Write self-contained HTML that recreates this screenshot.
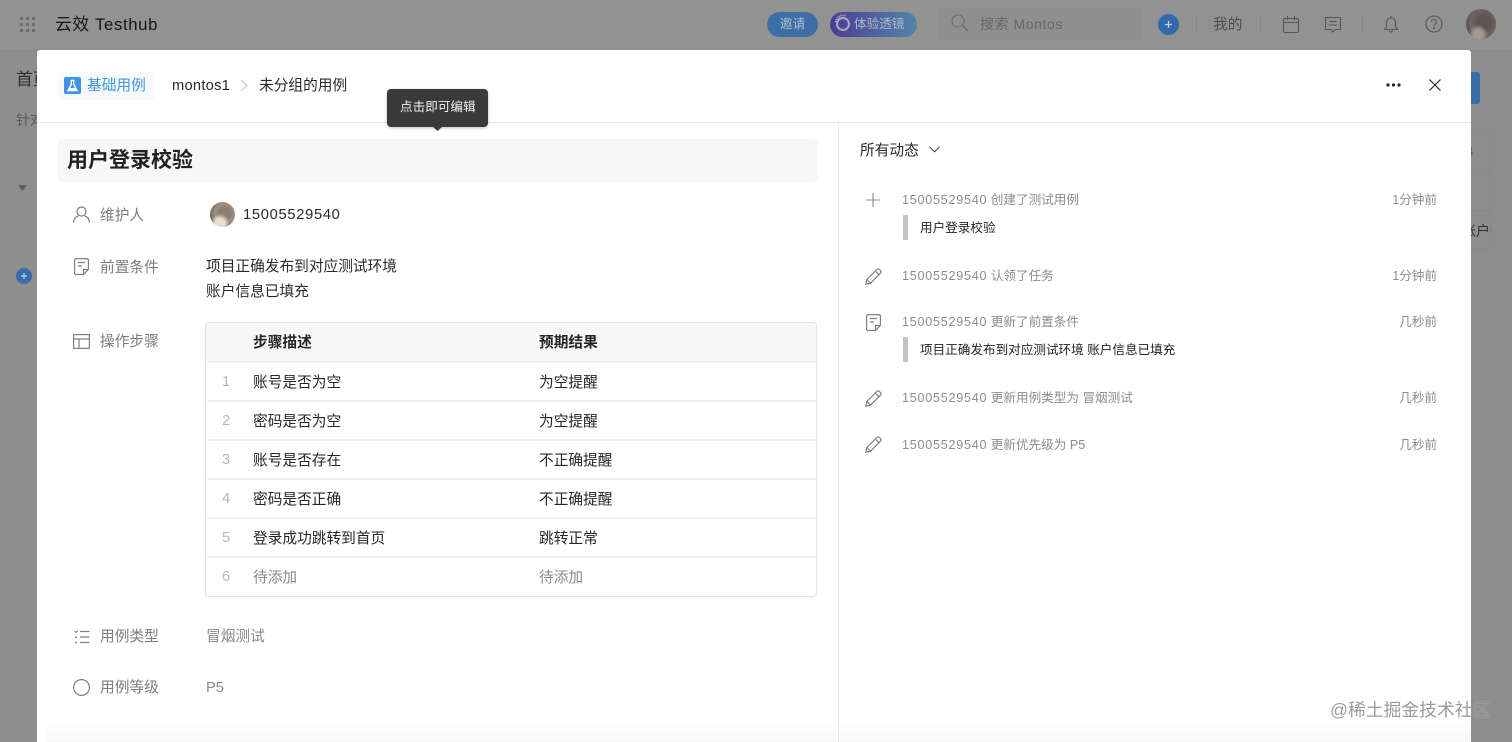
<!DOCTYPE html>
<html lang="zh"><head><meta charset="utf-8"><title>云效 Testhub</title>
<style>
html,body{margin:0;padding:0}
body{width:1512px;height:742px;overflow:hidden;position:relative;background:#8e8e8e;font-family:"Liberation Sans","Noto Sans CJK SC",sans-serif;color:#1f1f1f;font-size:14.7px}
.t{position:absolute;white-space:nowrap;line-height:20px}
.a{position:absolute}
svg{position:absolute;overflow:visible;fill:none}
.lb{color:#7d7d7d;left:100px}
.n{letter-spacing:.7px}
.ac{color:#8c8c8c;font-size:12.6px;left:902px}
.ac span{letter-spacing:.75px}
.tm{color:#8c8c8c;font-size:12.6px;right:75px}
.q{position:absolute;left:903px;width:5px;background:#c4c4c4}
.bk{font-size:12.6px;left:920px;color:#222}
.hl{position:absolute;left:207px;width:609px;height:2px;background:#f0f0f0}
.num{left:222px;color:#b8b8b8;font-size:14.7px}
.c1{left:253px;color:#262626}
.c2{left:539px;color:#262626}
.g{color:#8a8a8a}
.ic{stroke:#7f7f7f;stroke-width:1.2}
.top{stroke:#565656;stroke-width:1.1}
</style></head><body>

<!-- top bar (dimmed) -->
<div class="a" style="left:0;top:0;width:1512px;height:50px;background:#929292"></div>
<div class="a" style="left:0;top:50px;width:1512px;height:1px;background:#8a8a8a"></div>
<svg style="left:20px;top:17px" width="15" height="15"><g fill="#6e6e6e"><rect x="0" y="0" width="3" height="3"/><rect x="6" y="0" width="3" height="3"/><rect x="12" y="0" width="3" height="3"/><rect x="0" y="6" width="3" height="3"/><rect x="6" y="6" width="3" height="3"/><rect x="12" y="6" width="3" height="3"/><rect x="0" y="12" width="3" height="3"/><rect x="6" y="12" width="3" height="3"/><rect x="12" y="12" width="3" height="3"/></g></svg>
<div class="t" style="left:55px;top:15px;font-size:16.8px;color:#161616;letter-spacing:.6px">云效 Testhub</div>

<div class="a" style="left:767px;top:12px;width:51px;height:25px;border-radius:13px;background:#3d6fa6"></div>
<div class="t" style="left:780px;top:14px;font-size:12.6px;color:#b0bfd2">邀请</div>
<div class="a" style="left:830px;top:12px;width:87px;height:25px;border-radius:13px;background:linear-gradient(90deg,#4c3d96 0%,#51609f 50%,#4f86a8 100%)"></div>
<svg style="left:832px;top:14px" width="20" height="20"><circle cx="11" cy="10" r="6" stroke="#a9a7c4" stroke-width="2"/><path d="M4 8A7 7 0 0 1 14 2" stroke="#b9b6d0" stroke-width="2" stroke-dasharray="1 1"/></svg>
<div class="t" style="left:854px;top:14px;font-size:12.6px;color:#aeb8ca">体验透镜</div>

<div class="a" style="left:938px;top:8px;width:204px;height:32px;border-radius:4px;background:#8f8f8f"></div>
<svg style="left:951px;top:14px" width="20" height="20"><circle cx="7" cy="7" r="6" stroke="#6f6f6f" stroke-width="1.1"/><path d="M11.5 11.5L17 17" stroke="#6f6f6f" stroke-width="1.6"/></svg>
<div class="t" style="left:980px;top:14px;font-size:14px;color:#686868;letter-spacing:.55px">搜索 Montos</div>

<div class="a" style="left:1158px;top:14px;width:21px;height:21px;border-radius:50%;background:#3468ad"></div>
<svg style="left:1158px;top:14px" width="21" height="21"><path d="M7 10.5H14M10.5 7V14" stroke="#c3d2e6" stroke-width="1.3"/></svg>
<div class="a" style="left:1196px;top:16px;width:1px;height:16px;background:#888"></div>
<div class="t" style="left:1213px;top:15px;font-size:14.7px;color:#4e4e4e">我的</div>
<div class="a" style="left:1260px;top:16px;width:1px;height:16px;background:#888"></div>
<svg style="left:1283px;top:16px" width="16" height="17" class="top"><rect x=".5" y="2.5" width="15" height="14" rx="1.5"/><path d="M.5 6.5H15.500M4.500 0V4M11.500 0V4"/></svg>
<svg style="left:1325px;top:17px" width="16" height="16" class="top"><path d="M.5 .5H15.500V12.500H10L8 15 6 12.500H.5Z"/><path d="M4 4.500H12M4 8H12"/></svg>
<div class="a" style="left:1362px;top:16px;width:1px;height:16px;background:#888"></div>
<svg style="left:1384px;top:16px" width="14" height="17" class="top"><path d="M.5 13.500H13.500L11.500 11V6.500C11.500 4 9.500 2 7 2S2.500 4 2.500 6.500V11ZM7 0V2M5.500 14.500C5.500 16.500 8.500 16.500 8.500 14.500"/></svg>
<svg style="left:1425px;top:15px" width="18" height="18" class="top"><circle cx="9" cy="9" r="8"/><path d="M6.500 7C6.500 3.500 11.500 3.500 11.500 7C11.500 8.800 9 9 9 11"/><circle cx="9" cy="13.200" r=".5" fill="#565656"/></svg>
<div class="a" style="left:1466px;top:9px;width:30px;height:30px;border-radius:50%;background:radial-gradient(circle at 40% 85%,#a59c90 0 14%,transparent 32%),radial-gradient(circle at 60% 45%,#5c5652 0 26%,#6d6561 55%,#35302d 100%)"></div>

<!-- page behind -->
<div class="t" style="left:16px;top:70px;font-size:16.8px;color:#2e2e2e">首页</div>
<div class="t" style="left:16px;top:110px;font-size:14px;color:#5b5b5b">针对</div>
<svg style="left:18px;top:185px" width="9" height="7"><path d="M0 0H9L4.500 6Z" fill="#5e5e5e"/></svg>
<div class="a" style="left:16px;top:268px;width:16px;height:16px;border-radius:50%;background:#3a6ba8"></div>
<svg style="left:16px;top:268px" width="16" height="16"><path d="M5 8H11M8 5V11" stroke="#c3d2e6" stroke-width="1.200"/></svg>
<div class="a" style="left:1471px;top:72px;width:9px;height:32px;border-radius:0 3px 3px 0;background:#356fa8"></div>
<div class="a" style="left:1471px;top:131px;width:20px;height:118px;border:1px solid #8a8a8a;border-left:0;box-sizing:border-box;border-radius:0 3px 3px 0"></div>
<div class="a" style="left:1471px;top:171px;width:20px;height:1px;background:#8a8a8a"></div>
<div class="a" style="left:1471px;top:210px;width:20px;height:1px;background:#8a8a8a"></div>
<div class="t" style="left:1471px;top:141px;width:8px;overflow:hidden;font-size:14px;color:#555"><span style="margin-left:-7px">B</span></div>
<div class="t" style="left:1471px;top:221px;width:20px;overflow:hidden;font-size:14px;color:#333"><span style="margin-left:-9px">账户信</span></div>

<!-- modal -->
<div class="a" style="left:37px;top:50px;width:1434px;height:692px;background:#fff;border-radius:3px 3px 0 0;overflow:hidden">
  <div class="a" style="left:8px;top:670px;width:1426px;height:22px;background:linear-gradient(#fff,#f8f8f8)"></div>
  <div class="a" style="left:0;top:72px;width:1434px;height:1px;background:#e6e6e6"></div>
  <div class="a" style="left:801px;top:72px;width:1px;height:620px;background:#e8e8e8"></div>
</div>

<!-- header -->
<div class="a" style="left:58px;top:72px;width:97px;height:28px;border-radius:4px;background:#f6fafd"></div>
<div class="a" style="left:64px;top:77px;width:17px;height:17px;border-radius:2px;background:#3f95e3"></div>
<svg style="left:64px;top:77px" width="17" height="17"><path d="M6.500 3.500H10.500M7.300 3.500V7.500L4 13.500H13L9.700 7.500V3.500" stroke="#fff" stroke-width="1.400"/><path d="M5.500 11H11.500L13 13.500H4Z" fill="#fff"/></svg>
<div class="t" style="left:87px;top:76px;color:#3f95e3">基础用例</div>
<div class="t" style="left:172px;top:76px;color:#2a2a2a;letter-spacing:.25px">montos1</div>
<svg style="left:240px;top:79px" width="8" height="13"><path d="M1 1L7 6.500L1 12" stroke="#c4c4c4" stroke-width="1"/></svg>
<div class="t" style="left:259px;top:76px;color:#2a2a2a">未分组的用例</div>
<svg style="left:1386px;top:83px" width="15" height="4"><g fill="#222"><circle cx="2" cy="2" r="1.600"/><circle cx="7.500" cy="2" r="1.600"/><circle cx="13" cy="2" r="1.600"/></g></svg>
<svg style="left:1429px;top:79px" width="12" height="12"><path d="M.5 .5L11.500 11.500M11.500 .5L.5 11.500" stroke="#222" stroke-width="1.200"/></svg>

<!-- title -->
<div class="a" style="left:58px;top:139px;width:760px;height:43px;border-radius:5px;background:#f7f7f7"></div>
<div class="t" style="left:67px;top:151px;font-size:21px;font-weight:700;color:#222">用户登录校验</div>

<!-- tooltip -->
<div class="a" style="left:387px;top:89px;width:101px;height:38px;border-radius:4px;background:#3a3a3a;box-shadow:0 1px 3px rgba(0,0,0,.25)"></div>
<svg style="left:432px;top:126px" width="11" height="5"><path d="M0 0H11L5.500 5Z" fill="#3a3a3a"/></svg>
<div class="t" style="left:400px;top:97px;font-size:12.6px;color:#f2f2f2">点击即可编辑</div>

<!-- fields -->
<svg style="left:73px;top:206px" width="17" height="17" class="ic"><circle cx="8.500" cy="5.500" r="4.500"/><path d="M.6 16.500C.8 12.500 3 10.500 5.500 9.800M16.400 16.500C16.200 12.500 14 10.500 11.500 9.800"/></svg>
<div class="t lb" style="top:206px">维护人</div>
<div class="a" style="left:210px;top:202px;width:25px;height:25px;border-radius:50%;background:radial-gradient(circle at 40% 85%,#e8dfd2 0 18%,transparent 36%),radial-gradient(circle at 60% 45%,#8d7f76 0 28%,#a08f83 50%,#3f332c 100%)"></div>
<div class="t n" style="left:243px;top:205px;color:#2a2a2a">15005529540</div>

<svg style="left:74px;top:258px" width="15" height="17" class="ic"><path d="M9.500 16.500H2C1 16.500 .6 16 .6 15V2C.6 1 1 .6 2 .6H13C14 .6 14.400 1 14.400 2V11.500ZM9.500 16.500V11.500H14.400M3.800 4.500H11M3.800 8H8"/></svg>
<div class="t lb" style="top:258px">前置条件</div>
<div class="t" style="left:206px;top:257px;color:#2a2a2a">项目正确发布到对应测试环境</div>
<div class="t" style="left:206px;top:282px;color:#2a2a2a">账户信息已填充</div>

<svg style="left:73px;top:334px" width="17" height="15" class="ic"><rect x=".6" y=".6" width="15.800" height="13.800"/><path d="M.6 5H16.400M6 5V14.400"/></svg>
<div class="t lb" style="top:332px">操作步骤</div>

<!-- table -->
<div class="a" style="left:205px;top:322px;width:612px;height:275px;box-sizing:border-box;border:1px solid #e4e4e4;border-radius:4px;box-shadow:0 1px 2px rgba(0,0,0,.05)"></div>
<div class="a" style="left:206px;top:323px;width:610px;height:38px;background:#f7f7f7;border-radius:3px 3px 0 0"></div>
<div class="hl" style="top:361px"></div><div class="hl" style="top:400px"></div><div class="hl" style="top:439px"></div><div class="hl" style="top:478px"></div><div class="hl" style="top:517px"></div><div class="hl" style="top:556px"></div>
<div class="t c1" style="top:333px;font-weight:700">步骤描述</div><div class="t c2" style="top:333px;font-weight:700">预期结果</div>
<div class="t num" style="top:372px">1</div><div class="t c1" style="top:373px">账号是否为空</div><div class="t c2" style="top:373px">为空提醒</div>
<div class="t num" style="top:411px">2</div><div class="t c1" style="top:412px">密码是否为空</div><div class="t c2" style="top:412px">为空提醒</div>
<div class="t num" style="top:450px">3</div><div class="t c1" style="top:451px">账号是否存在</div><div class="t c2" style="top:451px">不正确提醒</div>
<div class="t num" style="top:489px">4</div><div class="t c1" style="top:490px">密码是否正确</div><div class="t c2" style="top:490px">不正确提醒</div>
<div class="t num" style="top:528px">5</div><div class="t c1" style="top:529px">登录成功跳转到首页</div><div class="t c2" style="top:529px">跳转正常</div>
<div class="t num" style="top:567px">6</div><div class="t c1 g" style="top:568px">待添加</div><div class="t c2 g" style="top:568px">待添加</div>

<svg style="left:74px;top:630px" width="16" height="14" class="ic"><path d="M6 1.500H15.500M6 7H15.500M6 12.500H15.500"/><path d="M.6 1L2 2.500L4 .5" stroke-width="1"/><circle cx="2" cy="7" r="1" fill="#7f7f7f" stroke="none"/><circle cx="2" cy="12.500" r="1" fill="#7f7f7f" stroke="none"/></svg>
<div class="t lb" style="top:627px">用例类型</div>
<div class="t g" style="left:206px;top:627px">冒烟测试</div>
<svg style="left:73px;top:679px" width="17" height="17" class="ic"><circle cx="8.500" cy="8.500" r="7.900"/></svg>
<div class="t lb" style="top:678px">用例等级</div>
<div class="t g" style="left:206px;top:678px">P5</div>

<!-- activity -->
<div class="t" style="left:860px;top:141px;color:#2a2a2a">所有动态</div>
<svg style="left:929px;top:146px" width="11" height="7"><path d="M.5 .8L5.500 5.800L10.500 .8" stroke="#333" stroke-width="1"/></svg>

<svg style="left:866px;top:193px" width="14" height="14"><path d="M7 0V14M0 7H14" stroke="#8d8d8d" stroke-width="1.100"/></svg>
<div class="t ac" style="top:190px"><span>15005529540</span> 创建了测试用例</div>
<div class="t tm" style="top:190px">1分钟前</div>
<div class="q" style="top:215px;height:25px"></div>
<div class="t bk" style="top:218px">用户登录校验</div>

<svg style="left:865px;top:268px" width="17" height="17" class="ic"><path d="M.8 16.200L1.800 11.500L11.800 1.500C12.600 .7 13.600 .7 14.400 1.500L15.500 2.600C16.300 3.400 16.300 4.400 15.500 5.200L5.500 15.200ZM10.300 3L14 6.700M1.800 11.500L5.500 15.200"/></svg>
<div class="t ac" style="top:266px"><span>15005529540</span> 认领了任务</div>
<div class="t tm" style="top:266px">1分钟前</div>

<svg style="left:866px;top:314px" width="15" height="17" class="ic"><path d="M9.500 16.500H2C1 16.500 .6 16 .6 15V2C.6 1 1 .6 2 .6H13C14 .6 14.400 1 14.400 2V11.500ZM9.500 16.500V11.500H14.400M3.800 4.500H11M3.800 8H8"/></svg>
<div class="t ac" style="top:312px"><span>15005529540</span> 更新了前置条件</div>
<div class="t tm" style="top:312px">几秒前</div>
<div class="q" style="top:337px;height:25px"></div>
<div class="t bk" style="top:340px">项目正确发布到对应测试环境 账户信息已填充</div>

<svg style="left:865px;top:390px" width="17" height="17" class="ic"><path d="M.8 16.200L1.800 11.500L11.800 1.500C12.600 .7 13.600 .7 14.400 1.500L15.500 2.600C16.300 3.400 16.300 4.400 15.500 5.200L5.500 15.200ZM10.300 3L14 6.700M1.800 11.500L5.500 15.200"/></svg>
<div class="t ac" style="top:388px"><span>15005529540</span> 更新用例类型为 冒烟测试</div>
<div class="t tm" style="top:388px">几秒前</div>

<svg style="left:865px;top:436px" width="17" height="17" class="ic"><path d="M.8 16.200L1.800 11.500L11.800 1.500C12.600 .7 13.600 .7 14.400 1.500L15.500 2.600C16.300 3.400 16.300 4.400 15.500 5.200L5.500 15.200ZM10.300 3L14 6.700M1.800 11.500L5.500 15.200"/></svg>
<div class="t ac" style="top:435px"><span>15005529540</span> 更新优先级为 P5</div>
<div class="t tm" style="top:435px">几秒前</div>

<!-- watermark -->
<div class="t" style="left:1330px;top:700px;font-size:17.8px;color:rgba(130,130,130,.8);text-shadow:0 0 1px rgba(255,255,255,.6)">@稀土掘金技术社区</div>
</body></html>
